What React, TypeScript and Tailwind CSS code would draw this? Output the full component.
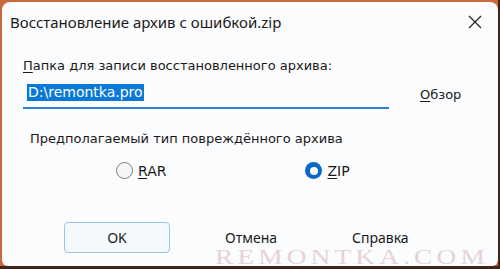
import React from "react";

export default function App() {
  return (
    <div className="w-[500px] h-[269px] overflow-hidden bg-[#c96a3e] border-r-2 border-b-[3px] border-r-[#3e2419] border-b-[#3e2419]">
      <div className="relative ml-[2px] mt-[2px] h-[264px] rounded-t-[8px] rounded-b-[6px] bg-[#fbfcfd] [font-family:'Noto_Sans',sans-serif] text-[#1a1a1a] overflow-hidden">
        {/* title bar */}
        <div className="flex items-center h-[40px] pl-[8px] pr-[14px]">
          <div className="text-[15px] leading-none flex-1">Восстановление архив с ошибкой.zip</div>
          <svg width="14" height="14" viewBox="0 0 14 14" className="mr-[2px]">
            <path d="M1 1 L13 13 M13 1 L1 13" stroke="#222" strokeWidth="1.2" fill="none" />
          </svg>
        </div>
        <div className="pl-[21px] pr-[34px] [font-family:'DejaVu_Sans',sans-serif] text-[13px] leading-none">
          <div className="mt-[17px]"><span className="underline underline-offset-[2px]">П</span>апка для записи восстановленного архива:</div>
          <div className="flex items-end mt-[5px]">
            <div className="w-[366px] h-[32px] border-b-2 border-b-[#2f7fd6] pl-[4px] flex items-center">
              <span className="bg-[#0a78d7] text-white px-[1px] text-[14px] leading-[17px]">D:\remontka.pro</span>
            </div>
            <div className="ml-[31px] pb-[8px] text-[13px]"><span className="underline underline-offset-[2px]">О</span>бзор</div>
          </div>
          <div className="mt-[23px] ml-[7px]">Предполагаемый тип повреждённого архива</div>
          <div className="flex mt-[17px] ml-[93px] items-center">
            <div className="flex items-center">
              <div className="w-[17px] h-[17px] rounded-full border border-[#7d7d7d] bg-[#f6f6f6]"></div>
              <span className="ml-[5px] text-[14px]"><span className="underline underline-offset-[2px]">R</span>AR</span>
            </div>
            <div className="flex items-center ml-[139px]">
              <div className="w-[17px] h-[17px] rounded-full bg-[#0a67c8] flex items-center justify-center">
                <div className="w-[8px] h-[8px] rounded-full bg-white"></div>
              </div>
              <span className="ml-[5px] text-[14px]"><span className="underline underline-offset-[2px]">Z</span>IP</span>
            </div>
          </div>
        </div>
        <div className="flex items-center mt-[43px] pl-[62px] text-[14px] leading-[18px]">
          <div className="w-[106px] h-[31px] rounded-[4px] border border-[#9cc4e8] bg-[#f4f9fd] flex items-center justify-center">OK</div>
          <div className="ml-[55px]">Отмена</div>
          <div className="ml-[75px]">Справка</div>
        </div>
        <div className="absolute left-[213px] top-[248px] origin-left scale-x-[1.37] [font-family:'Liberation_Serif',serif] text-[20px] leading-[14px] tracking-[3px] text-[#e6d3d6]">REMONTKA.COM</div>
      </div>
    </div>
  );
}
